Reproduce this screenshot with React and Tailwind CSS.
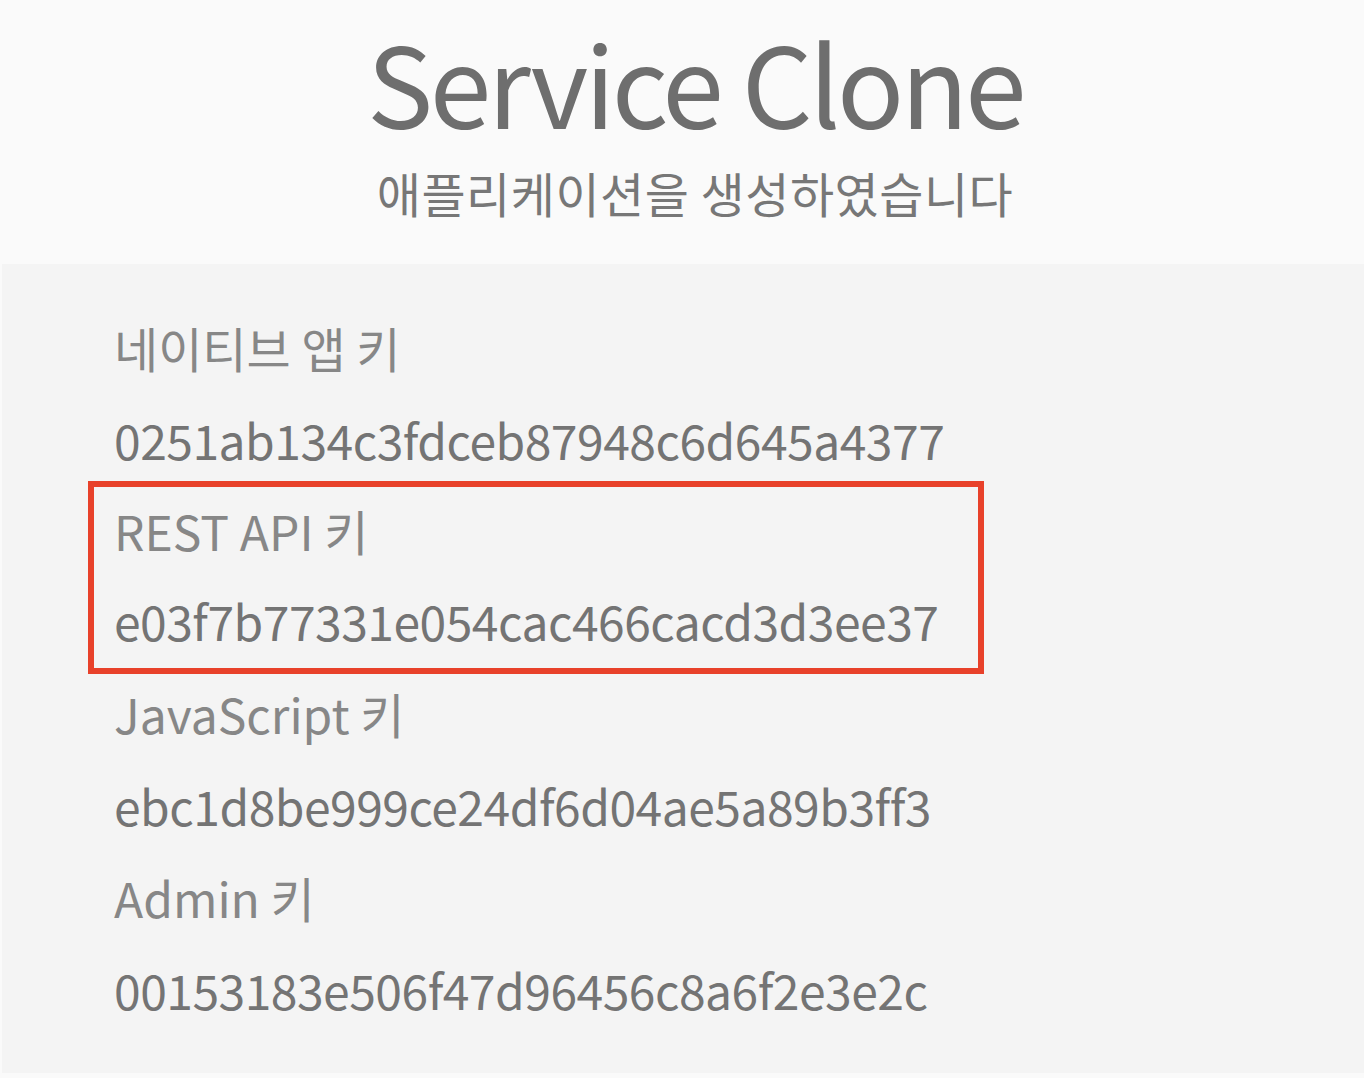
import React from 'react';

const keys = [
  { label: '네이티브 앱 키', value: '0251ab134c3fdceb87948c6d645a4377' },
  { label: 'REST API 키', value: 'e03f7b77331e054cac466cacd3d3ee37', marked: true },
  { label: 'JavaScript 키', value: 'ebc1d8be999ce24df6d04ae5a89b3ff3' },
  { label: 'Admin 키', value: '00153183e506f47d96456c8a6f2e3e2c' },
];

export default function App() {
  return (
    <div
      className="w-[1364px] h-[1078px] bg-[#fafafa] overflow-hidden"
      style={{ fontFamily: '"Noto Sans CJK KR", "Noto Sans", sans-serif' }}
    >
      {/* Header */}
      <div className="h-[264px] flex flex-col items-center pt-[17px] pl-[26px]">
        <h1 className="text-[111px] leading-[128px] text-[#6e6e6e] font-normal tracking-[-3.5px]">
          Service Clone
        </h1>
        <p className="text-[48px] leading-[60px] text-[#777777] mt-[17px] tracking-[0.5px]">
          애플리케이션을 생성하였습니다
        </p>
      </div>

      {/* Key list */}
      <div className="h-[809px] bg-[#f4f4f4] ml-[2px] py-[37px] pl-[112px]">
        {keys.map((k) => (
          <div
            key={k.label}
            className={
              k.marked
                ? 'w-[896px] ml-[-26px] pl-[20px] border-[6px] border-[#e8412a] -mt-[4px] -mb-[7px]'
                : ''
            }
          >
            <div
              className={`text-[48px] text-[#878787] ${k.marked ? 'leading-[86px]' : 'leading-[92px]'}`}
            >
              {k.label}
            </div>
            <div
              className={`text-[48px] text-[#747474] tracking-[-0.5px] ${k.marked ? 'leading-[95px]' : 'leading-[92px]'}`}
            >
              {k.value}
            </div>
          </div>
        ))}
      </div>
    </div>
  );
}
